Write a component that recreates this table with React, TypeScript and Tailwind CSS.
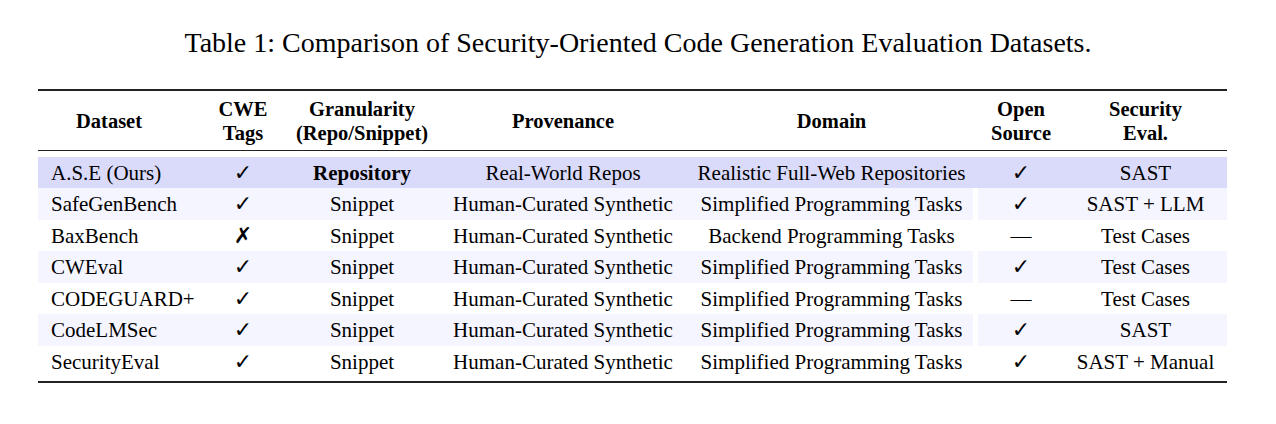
const serif = '"Liberation Serif", "Times New Roman", serif';

type Row = {
  name: string;
  cwe: string;
  gran: string;
  prov: string;
  domain: string;
  open: string;
  evalv: string;
  tone: 'ours' | 'light' | 'plain';
};

const rows: Row[] = [
  { name: 'A.S.E (Ours)', cwe: '✓', gran: 'Repository', prov: 'Real-World Repos', domain: 'Realistic Full-Web Repositories', open: '✓', evalv: 'SAST', tone: 'ours' },
  { name: 'SafeGenBench', cwe: '✓', gran: 'Snippet', prov: 'Human-Curated Synthetic', domain: 'Simplified Programming Tasks', open: '✓', evalv: 'SAST + LLM', tone: 'light' },
  { name: 'BaxBench', cwe: '✗', gran: 'Snippet', prov: 'Human-Curated Synthetic', domain: 'Backend Programming Tasks', open: '—', evalv: 'Test Cases', tone: 'plain' },
  { name: 'CWEval', cwe: '✓', gran: 'Snippet', prov: 'Human-Curated Synthetic', domain: 'Simplified Programming Tasks', open: '✓', evalv: 'Test Cases', tone: 'light' },
  { name: 'CODEGUARD+', cwe: '✓', gran: 'Snippet', prov: 'Human-Curated Synthetic', domain: 'Simplified Programming Tasks', open: '—', evalv: 'Test Cases', tone: 'plain' },
  { name: 'CodeLMSec', cwe: '✓', gran: 'Snippet', prov: 'Human-Curated Synthetic', domain: 'Simplified Programming Tasks', open: '✓', evalv: 'SAST', tone: 'light' },
  { name: 'SecurityEval', cwe: '✓', gran: 'Snippet', prov: 'Human-Curated Synthetic', domain: 'Simplified Programming Tasks', open: '✓', evalv: 'SAST + Manual', tone: 'plain' },
];

function Mark({ v }: { v: string }) {
  if (v === '—') return <span>—</span>;
  return (
    <span className="text-[22px] font-bold" style={{ fontFamily: '"DejaVu Sans", sans-serif' }}>
      {v}
    </span>
  );
}

function BodyRow({ r, odd }: { r: Row; odd: boolean }) {
  const bg = r.tone === 'ours' ? 'bg-[#dadafa]' : r.tone === 'light' ? 'bg-[#f5f5ff]' : 'bg-white';
  const gap = r.tone === 'ours' ? 'bg-[#dadafa]' : 'bg-white';
  return (
    <div className={`flex items-center ${odd ? 'h-[32px]' : 'h-[31px]'} ${bg}`}>
      <div className="w-[160px] pl-[13px] whitespace-nowrap">{r.name}</div>
      <div className="w-[90px] text-center"><Mark v={r.cwe} /></div>
      <div className={`w-[148px] text-center whitespace-nowrap ${r.tone === 'ours' ? 'font-bold' : ''}`}>{r.gran}</div>
      <div className="w-[254px] text-center whitespace-nowrap">{r.prov}</div>
      <div className="w-[283px] text-center whitespace-nowrap">{r.domain}</div>
      <div className={`w-[5px] self-stretch ${gap}`} />
      <div className="w-[86px] text-center"><Mark v={r.open} /></div>
      <div className="w-[163px] text-center whitespace-nowrap">{r.evalv}</div>
    </div>
  );
}

export default function App() {
  return (
    <div className="w-[1276px] h-[424px] bg-white text-black" style={{ fontFamily: serif }}>
      <div className="pt-[27px] text-center text-[28px] leading-[32px]">
        Table 1: Comparison of Security-Oriented Code Generation Evaluation Datasets.
      </div>

      <div className="ml-[38px] mt-[30px] w-[1189px]">
        <div className="h-[2px] bg-[#222]" />
        <div className="flex h-[59px] items-center text-[20.5px] font-bold leading-[24px]">
          <div className="w-[160px] pl-[38px]">Dataset</div>
          <div className="w-[90px] text-center">CWE<br />Tags</div>
          <div className="w-[148px] text-center whitespace-nowrap">Granularity<br />(Repo/Snippet)</div>
          <div className="w-[254px] text-center">Provenance</div>
          <div className="w-[283px] text-center">Domain</div>
          <div className="w-[5px]" />
          <div className="w-[86px] text-center">Open<br />Source</div>
          <div className="w-[163px] text-center">Security<br />Eval.</div>
        </div>
        <div className="h-[1px] bg-[#222]" />
        <div className="mt-[6px] text-[21px] leading-[24px]">
          {rows.map((r, i) => (
            <BodyRow key={r.name} r={r} odd={i % 2 === 1} />
          ))}
        </div>
        <div className="mt-[4px] h-[2px] bg-[#222]" />
      </div>
    </div>
  );
}
